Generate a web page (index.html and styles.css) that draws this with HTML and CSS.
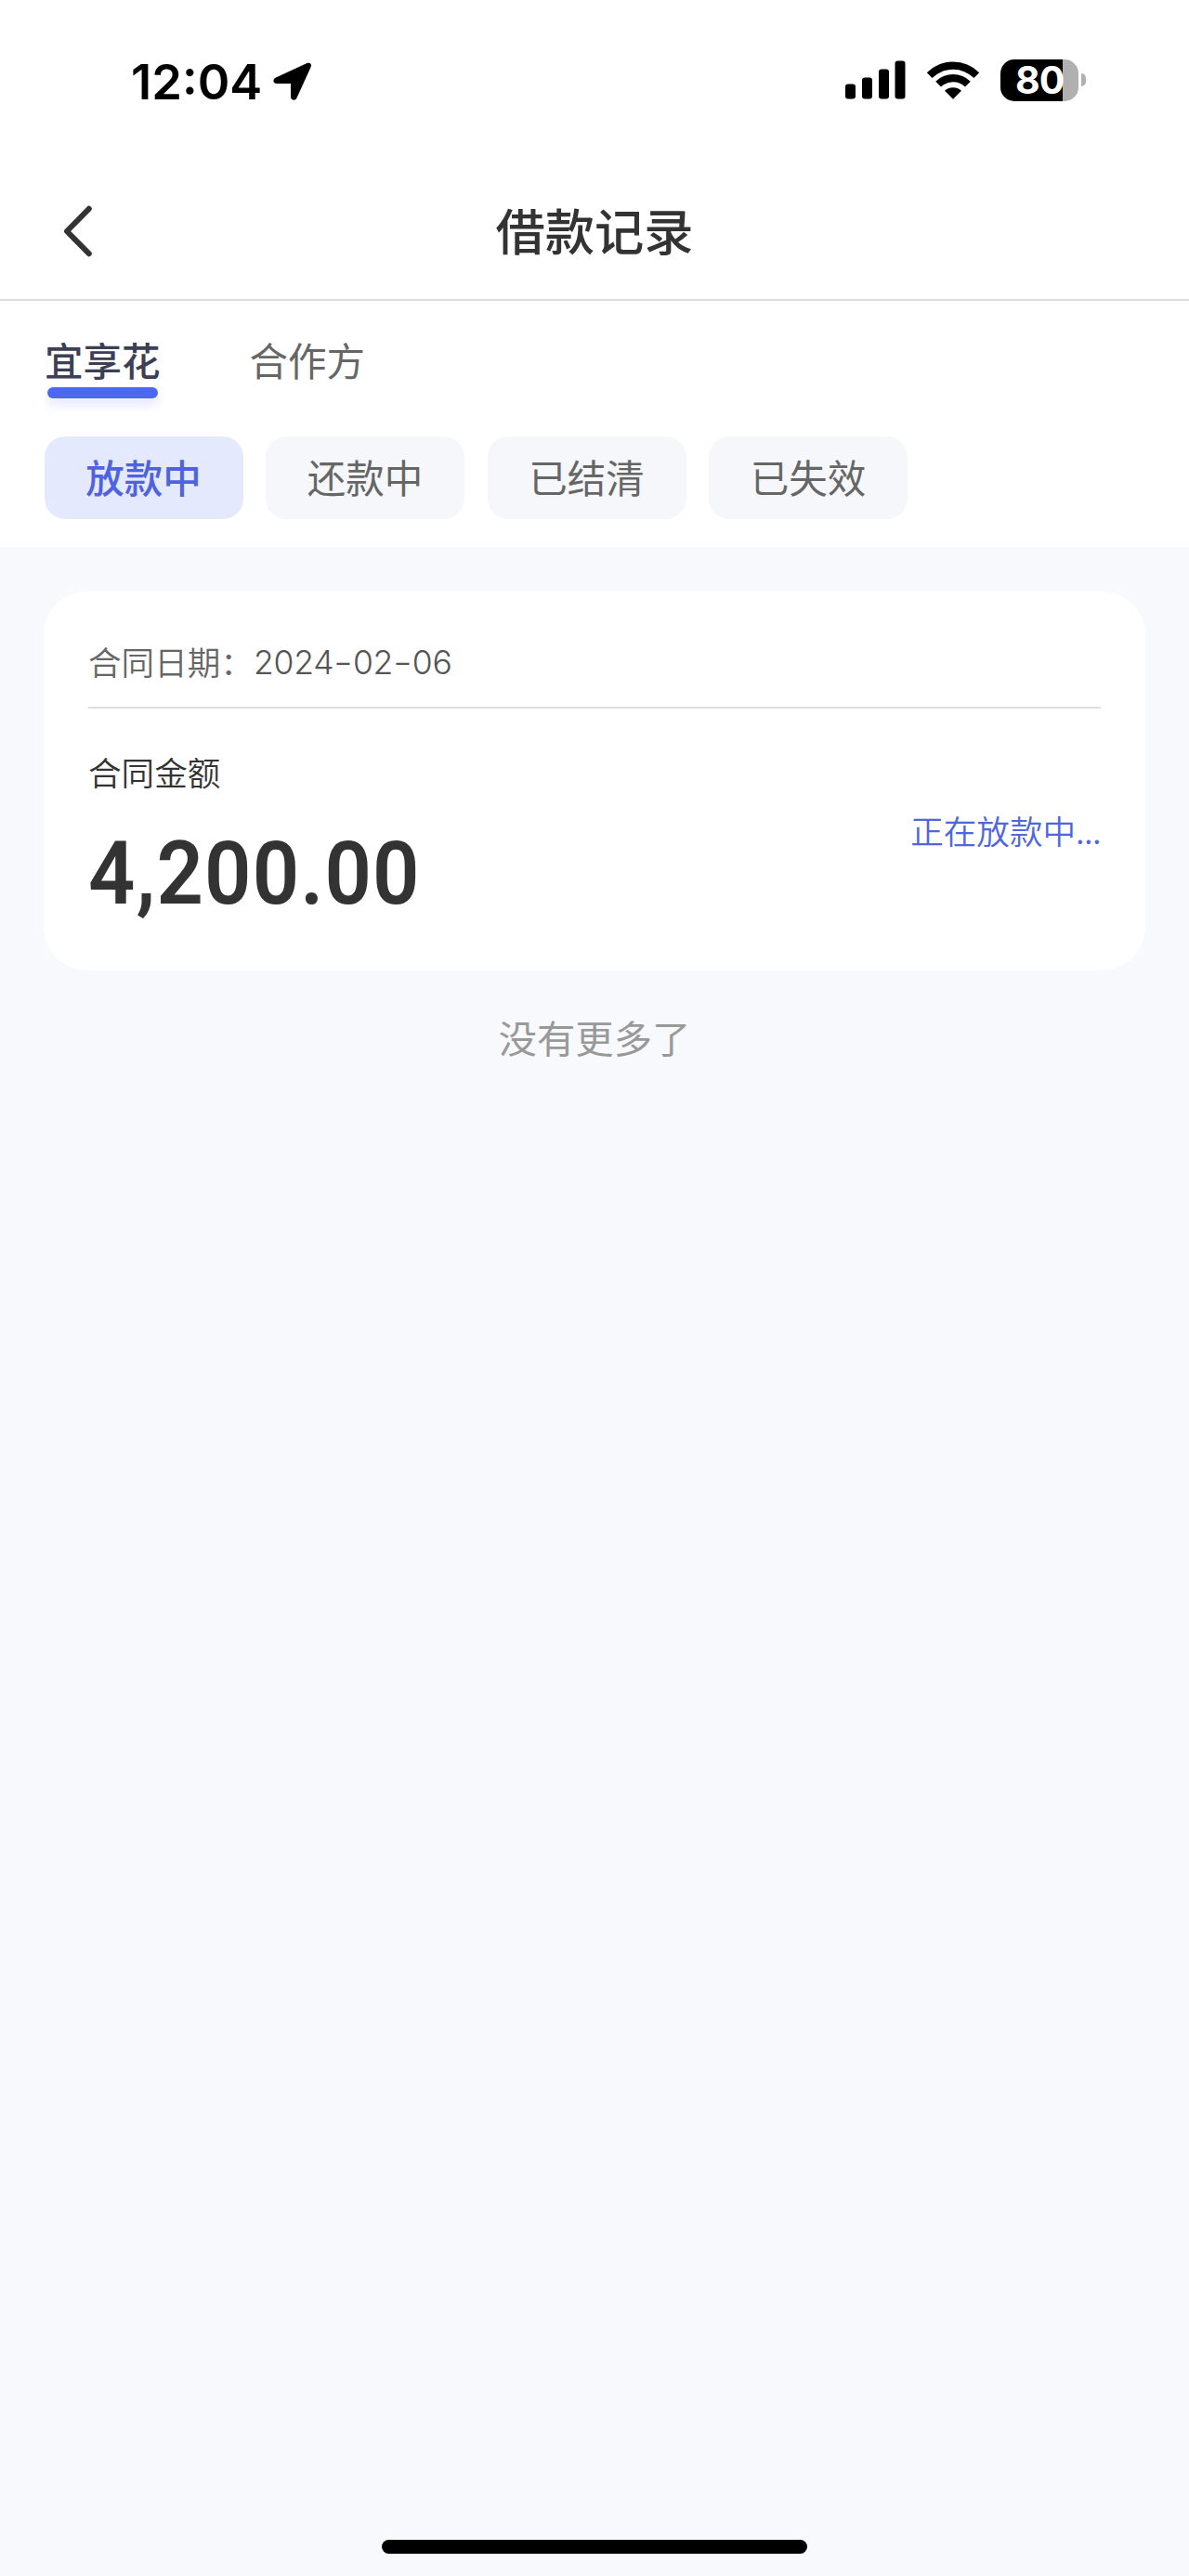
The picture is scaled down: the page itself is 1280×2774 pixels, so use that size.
FILE: index.html
```html
<!DOCTYPE html>
<html lang="zh-CN">
<head>
<meta charset="utf-8">
<title>借款记录</title>
<link rel="stylesheet" href="styles.css">
</head>
<body>
<div class="screen">
  <header class="top">
    <div class="status-bar">
      <div class="status-left">
        <span class="time">12:04</span>
        <svg class="location" width="42" height="42" viewBox="0 0 42 42"><path d="M3 16.5 36 1.2C39.5-.3 42 2 40.6 5.2L25.5 38.4C23.8 42 19 41 19 37.2V23H4.2C-.2 23-1 18.4 3 16.5Z"/></svg>
      </div>
      <div class="status-right">
        <svg width="65" height="42" viewBox="0 0 65 42"><rect y="25.500" width="11" height="16" rx="3"/><rect x="18" y="18.500" width="11" height="23" rx="3"/><rect x="36" y="9.500" width="11" height="32" rx="3"/><rect x="53.500" y=".5" width="11" height="41" rx="3"/></svg>
        <svg width="58" height="42" viewBox="0 0 58 42"><path d="M.8 13.200a40 40 0 0 1 56.400 0L51.500 19a32 32 0 0 0-45 0Z"/><path d="M10.200 22.700a27 27 0 0 1 37.600 0L42 28.500a19 19 0 0 0-26 0Z"/><path d="M20 32.800a13.500 13.500 0 0 1 18 0L29 41.800Z"/></svg>
        <div class="battery"><div class="battery-body"><span class="battery-level">80</span></div><div class="battery-nub"></div></div>
      </div>
    </div>
    <nav class="nav">
      <svg class="back" width="32" height="56" viewBox="0 0 32 56"><path d="M27.800 3.800 4 28l23.800 24.200"/></svg>
      <h1 class="title">借款记录</h1>
    </nav>
    <div class="tabs">
      <div class="tab tab-active">宜享花</div>
      <div class="tab">合作方</div>
    </div>
    <div class="filters">
      <div class="filter filter-active">放款中</div>
      <div class="filter">还款中</div>
      <div class="filter">已结清</div>
      <div class="filter">已失效</div>
    </div>
  </header>
  <main class="content">
    <section class="card">
      <div class="card-date"><span>合同日期：</span><span class="date">2024<span class="dash">-</span>02<span class="dash">-</span>06</span></div>
      <div class="card-body">
        <div>
          <div class="label">合同金额</div>
          <div class="amount">4,200.00</div>
        </div>
        <div class="state">正在放款中<span class="dots">...</span></div>
      </div>
    </section>
    <p class="end">没有更多了</p>
  </main>
  <div class="home-bar"></div>
</div>
</body>
</html>
```

FILE: styles.css
```css
* { box-sizing: border-box; margin: 0; padding: 0; }
body { font-family: "Noto Sans CJK SC", sans-serif; background: #f8f9fd; color: #333; }
.screen { width: 1280px; height: 2774px; display: flex; flex-direction: column; }
.top { height: 589px; background: #fff; }
svg { display: block; flex: none; }

.status-bar { height: 176px; padding: 58px 111px 58px 141px; display: flex; justify-content: space-between; align-items: center; }
.status-left { display: flex; align-items: center; gap: 12px; }
.time { font: 600 52.500px/60px Inter, sans-serif; width: 141px; color: #000; white-space: nowrap; }
.status-right { display: flex; align-items: center; gap: 22px; margin-top: -4px; }
.battery { display: flex; align-items: center; gap: 3px; }
.battery-body { width: 84px; height: 45px; border-radius: 15px; background: linear-gradient(90deg, #000 67px, #b0b0b0 67px); padding-left: 16px; }
.battery-level { display: block; font: 700 41px/45px Inter, sans-serif; letter-spacing: -1px; color: #fff; }
.battery-nub { width: 5px; height: 14px; border-radius: 0 7px 7px 0; background: #b0b0b0; }

.nav { height: 148px; padding: 0 34px; display: grid; grid-template-columns: 66px 1fr 66px; align-items: center; border-bottom: 2px solid #dcdcdc; }
.back { justify-self: end; fill: none; stroke: #333; stroke-width: 6; stroke-linecap: round; stroke-linejoin: round; }
.title { font-size: 53.300px; line-height: 76px; font-weight: 500; text-align: center; padding-bottom: 5px; }

.tabs { display: flex; gap: 96px; padding: 33px 48px 0; height: 146px; }
.tab { font-size: 41.500px; line-height: 60px; color: #666; height: 72px; white-space: nowrap; }
.tab-active { color: #3c3f55; font-weight: 500; }
.tab-active::after { content: ""; display: block; width: 119px; height: 12px; margin: 0 0 0 3px; border-radius: 6px; background: #4d67f1; box-shadow: 0 8px 10px rgba(77, 103, 241, .13); }
.filters { display: flex; gap: 24.500px; padding: 0 47.500px; }
.filter { width: 214px; height: 89px; border-radius: 22px; background: #f5f7fb; color: #666; font-size: 41.500px; line-height: 86px; text-align: center; }
.filter-active { background: #e5e9fd; color: #4f63e0; font-weight: 500; }

.content { flex: 1; padding: 48px 47px 47px; }
.card { height: 408px; border-radius: 47px; background: #fff; padding: 47px 48px 0; }
.card-date { height: 79px; border-bottom: 2px solid #dedede; display: flex; font-size: 35.600px; line-height: 55px; font-weight: 350; color: #666; white-space: nowrap; }
.date { font: 300 35.500px/60px Inter, sans-serif; letter-spacing: -.2px; color: #555; }
.dash { display: inline-block; width: 20.500px; text-align: center; transform: scaleX(1.300); }
.card-body { display: flex; justify-content: space-between; align-items: flex-start; }
.label { font-size: 35.600px; line-height: 52px; margin-top: 42px; font-weight: 350; }
.amount { font: 600 95px/112px Roboto, sans-serif; margin-top: 28px; letter-spacing: 1.200px; transform: scaleX(.930); transform-origin: left; }
.state { font-size: 35.600px; line-height: 52px; margin-top: 105px; font-weight: 350; color: #4f67dc; white-space: nowrap; }
.dots { letter-spacing: -.6px; }
.end { margin-top: 41px; text-align: center; font-size: 41.300px; line-height: 60px; color: #999; }
.home-bar { width: 458px; height: 15px; border-radius: 8px; background: #000; margin: 0 auto 24px; }
```
